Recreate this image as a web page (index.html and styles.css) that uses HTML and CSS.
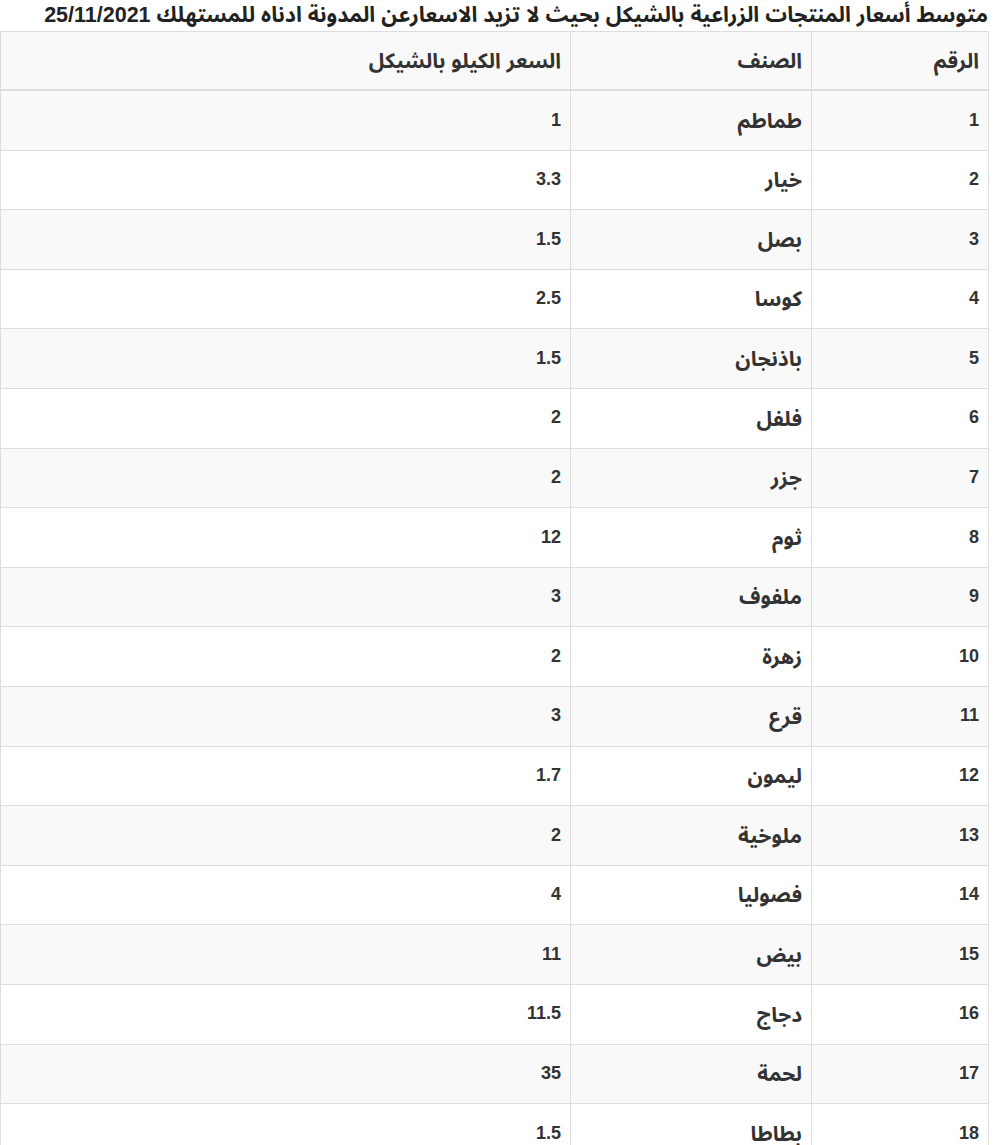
FILE: index.html
```html
<!DOCTYPE html>
<html lang="ar" dir="rtl">
<head>
<meta charset="utf-8">
<title>أسعار المنتجات الزراعية</title>
<link rel="stylesheet" href="styles.css">
</head>
<body>
<div class="page">
  <h3 class="title">متوسط أسعار المنتجات الزراعية بالشيكل بحيث لا تزيد الاسعارعن المدونة ادناه للمستهلك 25/11/2021</h3>
  <table class="prices">
    <colgroup>
      <col class="c-num">
      <col class="c-kind">
      <col class="c-price">
    </colgroup>
    <thead>
      <tr><th>الرقم</th><th>الصنف</th><th>السعر الكيلو بالشيكل</th></tr>
    </thead>
    <tbody>
      <tr><td>1</td><td class="kind">طماطم</td><td>1</td></tr>
      <tr><td>2</td><td class="kind">خيار</td><td>3.3</td></tr>
      <tr><td>3</td><td class="kind">بصل</td><td>1.5</td></tr>
      <tr><td>4</td><td class="kind">كوسا</td><td>2.5</td></tr>
      <tr><td>5</td><td class="kind">باذنجان</td><td>1.5</td></tr>
      <tr><td>6</td><td class="kind">فلفل</td><td>2</td></tr>
      <tr><td>7</td><td class="kind">جزر</td><td>2</td></tr>
      <tr><td>8</td><td class="kind">ثوم</td><td>12</td></tr>
      <tr><td>9</td><td class="kind">ملفوف</td><td>3</td></tr>
      <tr><td>10</td><td class="kind">زهرة</td><td>2</td></tr>
      <tr><td>11</td><td class="kind">قرع</td><td>3</td></tr>
      <tr><td>12</td><td class="kind">ليمون</td><td>1.7</td></tr>
      <tr><td>13</td><td class="kind">ملوخية</td><td>2</td></tr>
      <tr><td>14</td><td class="kind">فصوليا</td><td>4</td></tr>
      <tr><td>15</td><td class="kind">بيض</td><td>11</td></tr>
      <tr><td>16</td><td class="kind">دجاج</td><td>11.5</td></tr>
      <tr><td>17</td><td class="kind">لحمة</td><td>35</td></tr>
      <tr><td>18</td><td class="kind">بطاطا</td><td>1.5</td></tr>
    </tbody>
  </table>
</div>
</body>
</html>
```

FILE: styles.css
```css
html, body {
  margin: 0;
  padding: 0;
  background: #fff;
}
body {
  font-family: "Liberation Sans", "Noto Sans Arabic", "Noto Kufi Arabic", "DejaVu Sans", sans-serif;
  color: #333;
}
.page {
  width: 989px;
  margin-left: 0;
  margin-right: auto;
}
.title {
  margin: 0;
  height: 31px;
  line-height: 31px;
  font-size: 21.5px;
  font-weight: bold;
  color: #222;
  text-align: right;
  padding-right: 1px;
  white-space: nowrap;
  overflow: hidden;
}
.prices {
  width: 988px;
  margin-left: 1px;
  border-collapse: collapse;
  table-layout: fixed;
  border: 1px solid #ddd;
}
.c-num { width: 177px; }
.c-kind { width: 241px; }
.c-price { width: 570px; }
.prices th,
.prices td {
  border: 1px solid #ddd;
  height: 58.6px;
  padding: 0 9px;
  text-align: right;
  vertical-align: middle;
  font-size: 18px;
  font-weight: bold;
  color: #333;
  line-height: 1.2;
}
.prices thead th {
  border-bottom: 2px solid #ddd;
  background: #f9f9f9;
  height: 57px;
  font-size: 21px;
}
.prices td.kind {
  font-size: 21px;
}
.prices tbody tr:nth-child(odd) td {
  background: #f9f9f9;
}
```
